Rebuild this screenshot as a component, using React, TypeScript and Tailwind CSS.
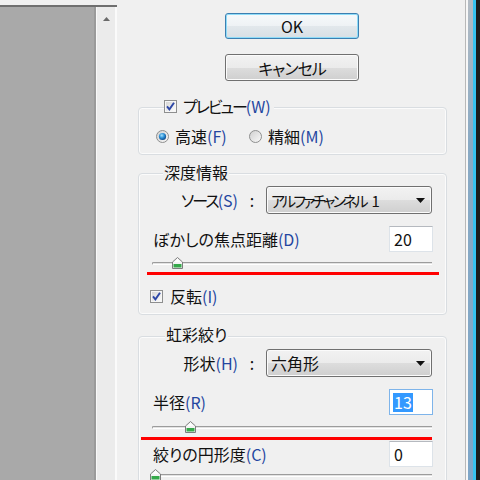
import React from "react";

const M = ({ children }: { children: React.ReactNode }) => (
  <span className="text-[#2446a0]">{children}</span>
);

const Check = () => (
  <svg width="13" height="13" viewBox="0 0 13 13" className="shrink-0">
    <defs>
      <linearGradient id="cbg" x1="0" y1="0" x2="1" y2="1">
        <stop offset="0" stopColor="#d6d6d6" />
        <stop offset="1" stopColor="#fbfbfb" />
      </linearGradient>
    </defs>
    <rect x="0.5" y="0.5" width="12" height="12" fill="#f6f6f6" stroke="#8e8f8f" />
    <rect x="2" y="2" width="9" height="9" fill="url(#cbg)" />
    <path d="M3 6.3 L5.4 9.3 L10 2.8" fill="none" stroke="#2d47a6" strokeWidth="1.9" />
  </svg>
);

const Radio = ({ on }: { on: boolean }) => (
  <svg width="13" height="13" viewBox="0 0 13 13" className="shrink-0">
    <defs>
      <linearGradient id="rbg" x1="0" y1="0" x2="1" y2="1">
        <stop offset="0" stopColor="#cfcfcf" />
        <stop offset="1" stopColor="#fafafa" />
      </linearGradient>
      <radialGradient id="rdot" cx="0.4" cy="0.35" r="0.7">
        <stop offset="0" stopColor="#a6e1fb" />
        <stop offset="0.5" stopColor="#2a8fd6" />
        <stop offset="1" stopColor="#0b3f7d" />
      </radialGradient>
    </defs>
    <circle cx="6.5" cy="6.5" r="6" fill="url(#rbg)" stroke="#8e8f8f" />
    {on && <circle cx="6.5" cy="6.5" r="3.6" fill="url(#rdot)" />}
  </svg>
);

const Thumb = () => (
  <svg width="11" height="12" viewBox="0 0 11 12">
    <path d="M5.5 0.5 L10.5 5 L10.5 11.5 L0.5 11.5 L0.5 5 Z" fill="#f4f4f4" stroke="#7d7d7d" />
    <path d="M1.5 7 L9.5 7 L9.5 10.5 L1.5 10.5 Z" fill="#35a94a" />
    <path d="M5.5 2 L8.5 5 L2.5 5 Z" fill="#ffffff" />
  </svg>
);

const Slider = ({ pos }: { pos: number }) => (
  <div className="relative h-[12px] ml-[13px] w-[280px] shrink-0">
    <div className="absolute left-0 right-0 top-[5px] h-[3px] rounded-l-full border-t border-l border-[#9c9c9c] border-b border-b-white bg-[#e3e3e3]" />
    <div className="absolute top-0" style={{ left: pos }}>
      <Thumb />
    </div>
  </div>
);

const Select = ({ children }: { children: React.ReactNode }) => (
  <div className="w-[166px] h-[28px] rounded-[3px] border border-[#707070] bg-[linear-gradient(#f2f2f2_0%,#ebebeb_50%,#dddddd_50%,#cfcfcf_100%)] shadow-[inset_0_0_0_1px_#fbfbfb] flex items-center justify-between pl-[4px] pr-[6px]">
    <span className="whitespace-nowrap flex items-center">{children}</span>
    <svg width="9" height="5" viewBox="0 0 9 5" className="shrink-0">
      <path d="M0 0 L9 0 L4.5 5 Z" fill="#111" />
    </svg>
  </div>
);

const Input = ({ value, focus }: { value: string; focus?: boolean }) => (
  <div
    className={
      "w-[44px] h-[26px] shrink-0 bg-white border flex items-center pl-[3px] " +
      (focus ? "border-[#7eb4ea]" : "border-[#dde3e9] border-t-[#b5b9bf]")
    }
  >
    {focus ? (
      <span className="bg-[#3399ff] text-white px-[1px] h-[19px] flex items-center">{value}</span>
    ) : (
      <span className="pl-[1px]">{value}</span>
    )}
  </div>
);

const Colon = () => <span className="w-[28px] flex justify-center">:</span>;

export default function App() {
  return (
    <div className="w-[480px] h-[480px] overflow-hidden flex bg-[#f0f0f0] font-['Noto_Sans_CJK_JP',sans-serif] [font-feature-settings:'palt'] text-[16px] text-[#111] leading-none">
      {/* left canvas + scrollbar */}
      <div className="w-[117px] shrink-0 flex flex-col">
        <div className="h-[5px] shrink-0" />
        <div className="h-[2px] shrink-0 bg-[#6f6f6f]" />
        <div className="flex-1 flex">
          <div className="w-[96px] bg-[#a9a9a9] border-r-2 border-[#9a9a9a]" />
          <div className="w-[19px] bg-[#ebebeb] border-l border-[#f8f8f8] flex justify-center pt-[10px]">
            <svg width="7" height="4" viewBox="0 0 7 4">
              <path d="M0 4 L3.5 0 L7 4 Z" fill="#6a6a6a" />
            </svg>
          </div>
          <div className="w-[2px] bg-[#fafafa]" />
        </div>
      </div>

      {/* dialog */}
      <div className="flex-1 flex flex-col pt-[13px] overflow-hidden">
        <div className="shrink-0 ml-[108px] w-[134px] h-[26px] rounded-[3px] border border-[#3c7fb1] shadow-[inset_0_0_0_1px_#8fdcf8] bg-[linear-gradient(#f6f9fb_0%,#eef2f5_50%,#e2e8ec_50%,#d8dfe4_100%)] flex items-center justify-center">
          OK
        </div>
        <div className="shrink-0 ml-[108px] mt-[15px] w-[134px] h-[27px] rounded-[3px] border border-[#707070] shadow-[inset_0_0_0_1px_#fbfbfb] bg-[linear-gradient(#f2f2f2_0%,#ebebeb_50%,#dddddd_50%,#cfcfcf_100%)] flex items-center justify-center tracking-[-1px]">
          キャンセル
        </div>

        {/* preview group */}
        <div className="shrink-0 relative ml-[21px] mt-[26px] w-[309px] h-[48px] rounded-[4px] border border-[#d9dde1] shadow-[inset_0_0_0_1px_#fbfbfb]">
          <div className="absolute left-[25px] top-[-11px] h-[18px] flex items-center gap-[6px] bg-[#f0f0f0] pr-[3px]">
            <Check />
            <span>
              <span className="tracking-[-2px]">プレビュー</span>
              <M>(W)</M>
            </span>
          </div>
          <div className="flex items-center h-[18px] mt-[19px] pl-[17px]">
            <div className="w-[93px] flex items-center gap-[6px]">
              <Radio on />
              <span>
                高速<M>(F)</M>
              </span>
            </div>
            <div className="flex items-center gap-[6px]">
              <Radio on={false} />
              <span>
                精細<M>(M)</M>
              </span>
            </div>
          </div>
        </div>

        {/* depth group */}
        <div className="shrink-0 relative ml-[21px] mt-[18px] w-[309px] h-[142px] rounded-[4px] border border-[#d9dde1] shadow-[inset_0_0_0_1px_#fbfbfb]">
          <div className="absolute left-[24px] top-[-11px] h-[18px] flex items-center bg-[#f0f0f0] px-[1px]">
            深度情報
          </div>
          <div className="flex items-center mt-[12px]">
            <div className="w-[127px] flex justify-end items-center">
              <span>
                <span className="tracking-[-2px]">ソース</span>
                <M>(S)</M>
              </span>
              <Colon />
            </div>
            <Select>
              <span className="text-[15px] tracking-[-2.8px]">アルファチャンネル</span>
              <span className="ml-[6px] text-[15px]">1</span>
            </Select>
          </div>
          <div className="flex items-center justify-between mt-[12px] pl-[14px] pr-[13px]">
            <span>
              ぼかしの焦点距離<M>(D)</M>
            </span>
            <Input value="20" />
          </div>
          <div className="mt-[5px]">
            <Slider pos={20} />
          </div>
          <div className="mt-[3px] ml-[8px] w-[292px] h-[3px] bg-[#ff0000]" />
          <div className="flex items-center gap-[7px] h-[18px] mt-[12px] pl-[11px]">
            <Check />
            <span>
              反転<M>(I)</M>
            </span>
          </div>
        </div>

        {/* iris group */}
        <div className="shrink-0 relative ml-[21px] mt-[21px] w-[309px] h-[170px] rounded-[4px] border border-[#d9dde1] shadow-[inset_0_0_0_1px_#fbfbfb]">
          <div className="absolute left-[26px] top-[-12px] h-[18px] flex items-center bg-[#f0f0f0] px-[1px]">
            虹彩絞り
          </div>
          <div className="flex items-center mt-[12px]">
            <div className="w-[127px] flex justify-end items-center">
              <span>
                形状<M>(H)</M>
              </span>
              <Colon />
            </div>
            <Select>
              <span>六角形</span>
            </Select>
          </div>
          <div className="flex items-center justify-between mt-[12px] pl-[14px] pr-[13px]">
            <span>
              半径<M>(R)</M>
            </span>
            <Input value="13" focus />
          </div>
          <div className="mt-[6px]">
            <Slider pos={33} />
          </div>
          <div className="mt-[4px] ml-[2px] w-[291px] h-[3px] bg-[#ff0000]" />
          <div className="flex items-center justify-between mt-[1px] pl-[14px] pr-[13px]">
            <span>
              絞りの円形度<M>(C)</M>
            </span>
            <Input value="0" />
          </div>
          <div className="mt-[2px]">
            <Slider pos={-2} />
          </div>
        </div>
      </div>

      {/* right window edge */}
      <div className="w-[15px] shrink-0 flex">
        <div className="w-[1px] bg-[#b8b8b8]" />
        <div className="w-[2px] bg-[#f7f7f7]" />
        <div className="w-[5px] bg-[linear-gradient(#b4bcc4,#8aaac4_30%,#7ea6c8)]" />
        <div className="w-[3px] bg-[#36c2ef]" />
        <div className="w-[4px] bg-[#1c1c1c]" />
      </div>
    </div>
  );
}
